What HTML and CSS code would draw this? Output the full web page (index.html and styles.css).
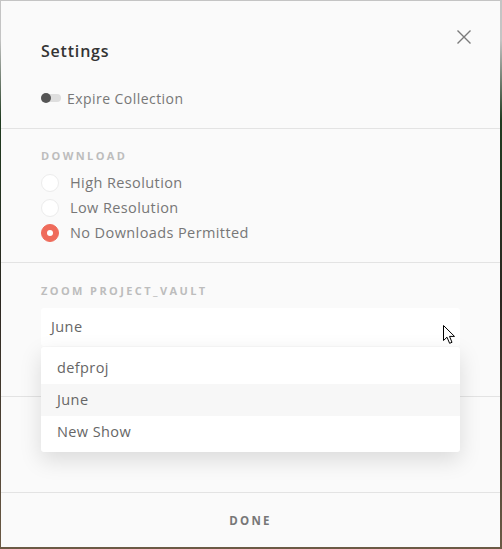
FILE: index.html
```html
<!DOCTYPE html>
<html>
<head>
<meta charset="utf-8">
<link rel="stylesheet" href="styles.css">
</head>
<body>
<div class="modal">
  <button class="close" aria-label="Close">
    <svg width="16" height="16" viewBox="0 0 16 16"><path d="M1.5 1.5 L14.5 14.5 M14.5 1.5 L1.5 14.5" stroke="#7a7a7a" stroke-width="1.4" fill="none"/></svg>
  </button>
  <section class="head">
    <h1 class="title">Settings</h1>
    <label class="toggle-row">
      <span class="toggle"><span class="knob"></span></span>
      <span class="toggle-label">Expire Collection</span>
    </label>
  </section>
  <section class="block download">
    <div class="label">DOWNLOAD</div>
    <div class="radio-row"><span class="radio"></span><span class="radio-text">High Resolution</span></div>
    <div class="radio-row"><span class="radio"></span><span class="radio-text">Low Resolution</span></div>
    <div class="radio-row"><span class="radio checked"></span><span class="radio-text">No Downloads Permitted</span></div>
  </section>
  <section class="block zoom">
    <div class="label">ZOOM PROJECT_VAULT</div>
    <div class="select-wrap">
      <div class="select">June</div>
      <ul class="menu">
        <li>defproj</li>
        <li class="hover">June</li>
        <li>New Show</li>
      </ul>
      <svg class="cursor" width="14" height="20" viewBox="0 0 14 20"><path d="M0.5 0.5 L0.5 15.5 L4 12.2 L6.6 18.3 L9 17.3 L6.5 11.4 L11.5 11.4 Z" fill="#fff" stroke="#000" stroke-width="1" stroke-linejoin="round"/></svg>
    </div>
  </section>
  <section class="block spacer"></section>
  <footer class="foot">DONE</footer>
</div>
</body>
</html>
```
FILE: styles.css
```css
html, body {
  margin: 0;
  padding: 0;
}
body {
  width: 502px;
  height: 549px;
  overflow: hidden;
  background: linear-gradient(180deg, #c4c4c4 0, #c4c4c4 40px, #1f3a1f 120px, #2b2620 300px, #6b5a45 549px);
  font-family: "Open Sans", "Noto Sans", sans-serif;
}
.modal {
  position: relative;
  margin: 1px 0 0 1px;
  width: 499px;
  height: 546px;
  background: #fafafa;
  display: flex;
  flex-direction: column;
  box-sizing: border-box;
}
.close {
  position: absolute;
  top: 28px;
  right: 28px;
  border: 0;
  background: none;
  padding: 0;
  width: 16px;
  height: 16px;
}
.close svg { display: block; }
.head {
  padding: 40px 40px 20px;
  border-bottom: 1px solid #e3e3e3;
}
.title {
  margin: 0;
  font-size: 16px;
  line-height: 21px;
  font-weight: 600;
  color: #333;
  letter-spacing: 0.8px;
}
.toggle-row {
  display: flex;
  align-items: center;
  margin-top: 26px;
  height: 20px;
}
.toggle {
  position: relative;
  width: 20px;
  height: 8px;
  border-radius: 4px;
  background: #dedede;
  margin-right: 6px;
}
.knob {
  position: absolute;
  left: 0;
  top: -1px;
  width: 10px;
  height: 10px;
  border-radius: 50%;
  background: #555;
}
.toggle-label {
  font-size: 14px;
  color: #777;
  letter-spacing: 0.45px;
}
.block {
  border-bottom: 1px solid #e3e3e3;
  padding: 0 40px;
  box-sizing: border-box;
}
.download {
  padding-top: 20px;
  height: 134px;
}
.label {
  font-size: 11px;
  line-height: 14px;
  font-weight: 700;
  letter-spacing: 2.4px;
  color: #bdbdbd;
}
.download .label { margin-bottom: 7px; }
.radio-row {
  display: flex;
  align-items: center;
  height: 25px;
}
.radio {
  width: 16px;
  height: 16px;
  border: 1px solid #ececec;
  border-radius: 50%;
  background: #fff;
  margin-right: 11px;
  position: relative;
}
.radio.checked {
  background: #ef6b5b;
  border-color: #ef6b5b;
}
.radio.checked::after {
  content: "";
  position: absolute;
  left: 5px;
  top: 5px;
  width: 6px;
  height: 6px;
  border-radius: 50%;
  background: #fff;
}
.radio-text {
  font-size: 14.5px;
  color: #777;
  letter-spacing: 0.4px;
}
.zoom {
  padding-top: 21px;
  height: 134px;
  position: relative;
  z-index: 2;
}
.zoom .label { margin-bottom: 10px; }
.select-wrap { position: relative; }
.select {
  height: 38px;
  line-height: 38px;
  background: #fff;
  border-radius: 3px;
  padding: 0 10px;
  font-size: 14.5px;
  color: #666;
  letter-spacing: 0.4px;
}
.menu {
  position: absolute;
  left: 0;
  right: 0;
  top: 39px;
  margin: 0;
  padding: 5px 0 4px;
  list-style: none;
  background: #fff;
  border-radius: 3px;
  box-shadow: 0 8px 22px rgba(0,0,0,0.13);
}
.menu li {
  height: 32px;
  line-height: 32px;
  padding: 0 16px;
  font-size: 14.5px;
  color: #666;
  letter-spacing: 0.4px;
}
.menu li.hover { background: #f7f7f7; }
.cursor {
  position: absolute;
  left: 402px;
  top: 17px;
}
.spacer {
  height: 96px;
}
.foot {
  flex: 1;
  display: flex;
  align-items: center;
  justify-content: center;
  font-size: 11.5px;
  font-weight: 700;
  letter-spacing: 2.2px;
  color: #777;
}
```
